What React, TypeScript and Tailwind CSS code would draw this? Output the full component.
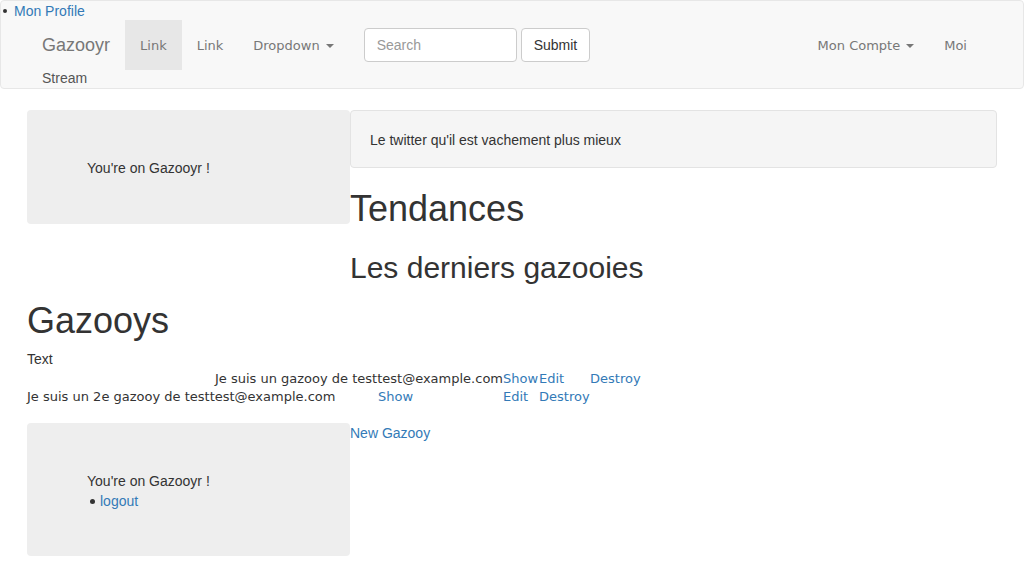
import React from "react";

const navLink = "px-[15px] pt-[2px] h-[50px] flex items-center text-[#777] font-['DejaVu_Sans',Verdana,sans-serif] text-[13px]";
const rowFont = "font-['DejaVu_Sans',Verdana,sans-serif] text-[13px] leading-[18px]";

const Caret = () => (
  <span className="ml-[6px] inline-block w-0 h-0 border-t-[4px] border-t-[#777] border-x-[4px] border-x-transparent" />
);

const Well = ({ children, className }: { children: React.ReactNode; className: string }) => (
  <div className={"bg-[#eee] rounded-[4px] pl-[60px] " + className}>{children}</div>
);

const App = () => {
  return (
    <div className="font-['Liberation_Sans',Arial,sans-serif] text-[14px] leading-[20px] text-[#333] bg-white min-h-[588px]">
      <nav className="border border-[#e7e7e7] bg-[#f8f8f8] rounded-[4px] mb-[21px]">
        <div className="h-[19px] flex items-center">
          <span className="ml-[2px] mr-[7px] w-[4px] h-[4px] rounded-full bg-[#333]" />
          <a href="#" className="text-[#337ab7]">Mon Profile</a>
        </div>
        <div className="w-[970px] mx-auto px-[15px]">
          <div className="flex h-[50px] items-center">
            <a href="#" className="pr-[15px] h-[50px] flex items-center text-[18px] text-[#777]">Gazooyr</a>
            <a href="#" className={navLink + " bg-[#e7e7e7] text-[#555]"}>Link</a>
            <a href="#" className={navLink}>Link</a>
            <a href="#" className={navLink}>
              Dropdown
              <Caret />
            </a>
            <form className="flex items-center gap-[4px] px-[15px]" onSubmit={(e) => e.preventDefault()}>
              <input
                type="text"
                placeholder="Search"
                className="w-[153px] h-[34px] px-[12px] border border-[#ccc] rounded-[4px] bg-white text-[14px] placeholder:text-[#999] outline-none"
              />
              <button type="submit" className="h-[34px] px-[12px] border border-[#ccc] rounded-[4px] bg-white text-[14px] text-[#333]">
                Submit
              </button>
            </form>
            <div className="ml-auto flex">
              <a href="#" className={navLink}>
                Mon Compte
                <Caret />
              </a>
              <a href="#" className={navLink}>Moi</a>
            </div>
          </div>
          <div className="h-[18px] leading-[16px] text-[#555]">Stream</div>
        </div>
      </nav>

      <div className="w-[970px] mx-auto">
        <div className="flex">
          <div className="w-[323px]">
            <Well className="pt-[48px] pb-[46px]">You're on Gazooyr !</Well>
          </div>
          <div className="flex-1">
            <div className="bg-[#f5f5f5] border border-[#e3e3e3] rounded-[4px] h-[58px] px-[19px] pt-[1px] flex items-center">
              Le twitter qu'il est vachement plus mieux
            </div>
            <h1 className="text-[36px] leading-[40px] mt-[21px]">Tendances</h1>
            <h2 className="text-[30px] leading-[33px] mt-[22px]">Les derniers gazooies</h2>
          </div>
        </div>

        <h1 className="text-[36px] leading-[40px] mt-[17px]">Gazooys</h1>
        <div className="mt-[8px] mb-[1px]">Text</div>
        <div className={"flex " + rowFont}>
          <span className="w-[476px] text-right">Je suis un gazooy de testtest@example.com</span>
          <a href="#" className="w-[36px] text-[#337ab7]">Show</a>
          <a href="#" className="w-[51px] text-[#337ab7]">Edit</a>
          <a href="#" className="text-[#337ab7]">Destroy</a>
        </div>
        <div className={"flex " + rowFont}>
          <span className="w-[351px]">Je suis un 2e gazooy de testtest@example.com</span>
          <a href="#" className="w-[125px] text-[#337ab7]">Show</a>
          <a href="#" className="w-[36px] text-[#337ab7]">Edit</a>
          <a href="#" className="text-[#337ab7]">Destroy</a>
        </div>

        <div className="flex mt-[17px]">
          <div className="w-[323px]">
            <Well className="pt-[49px] pb-[45px]">
              <div className="leading-[19px]">You're on Gazooyr !</div>
              <div className="flex items-center">
                <span className="ml-[3px] mr-[5px] w-[5px] h-[5px] rounded-full bg-[#333]" />
                <a href="#" className="text-[#337ab7]">logout</a>
              </div>
            </Well>
          </div>
          <div className="flex-1">
            <a href="#" className="text-[#337ab7]">New Gazooy</a>
          </div>
        </div>
      </div>
    </div>
  );
};

export default App;
